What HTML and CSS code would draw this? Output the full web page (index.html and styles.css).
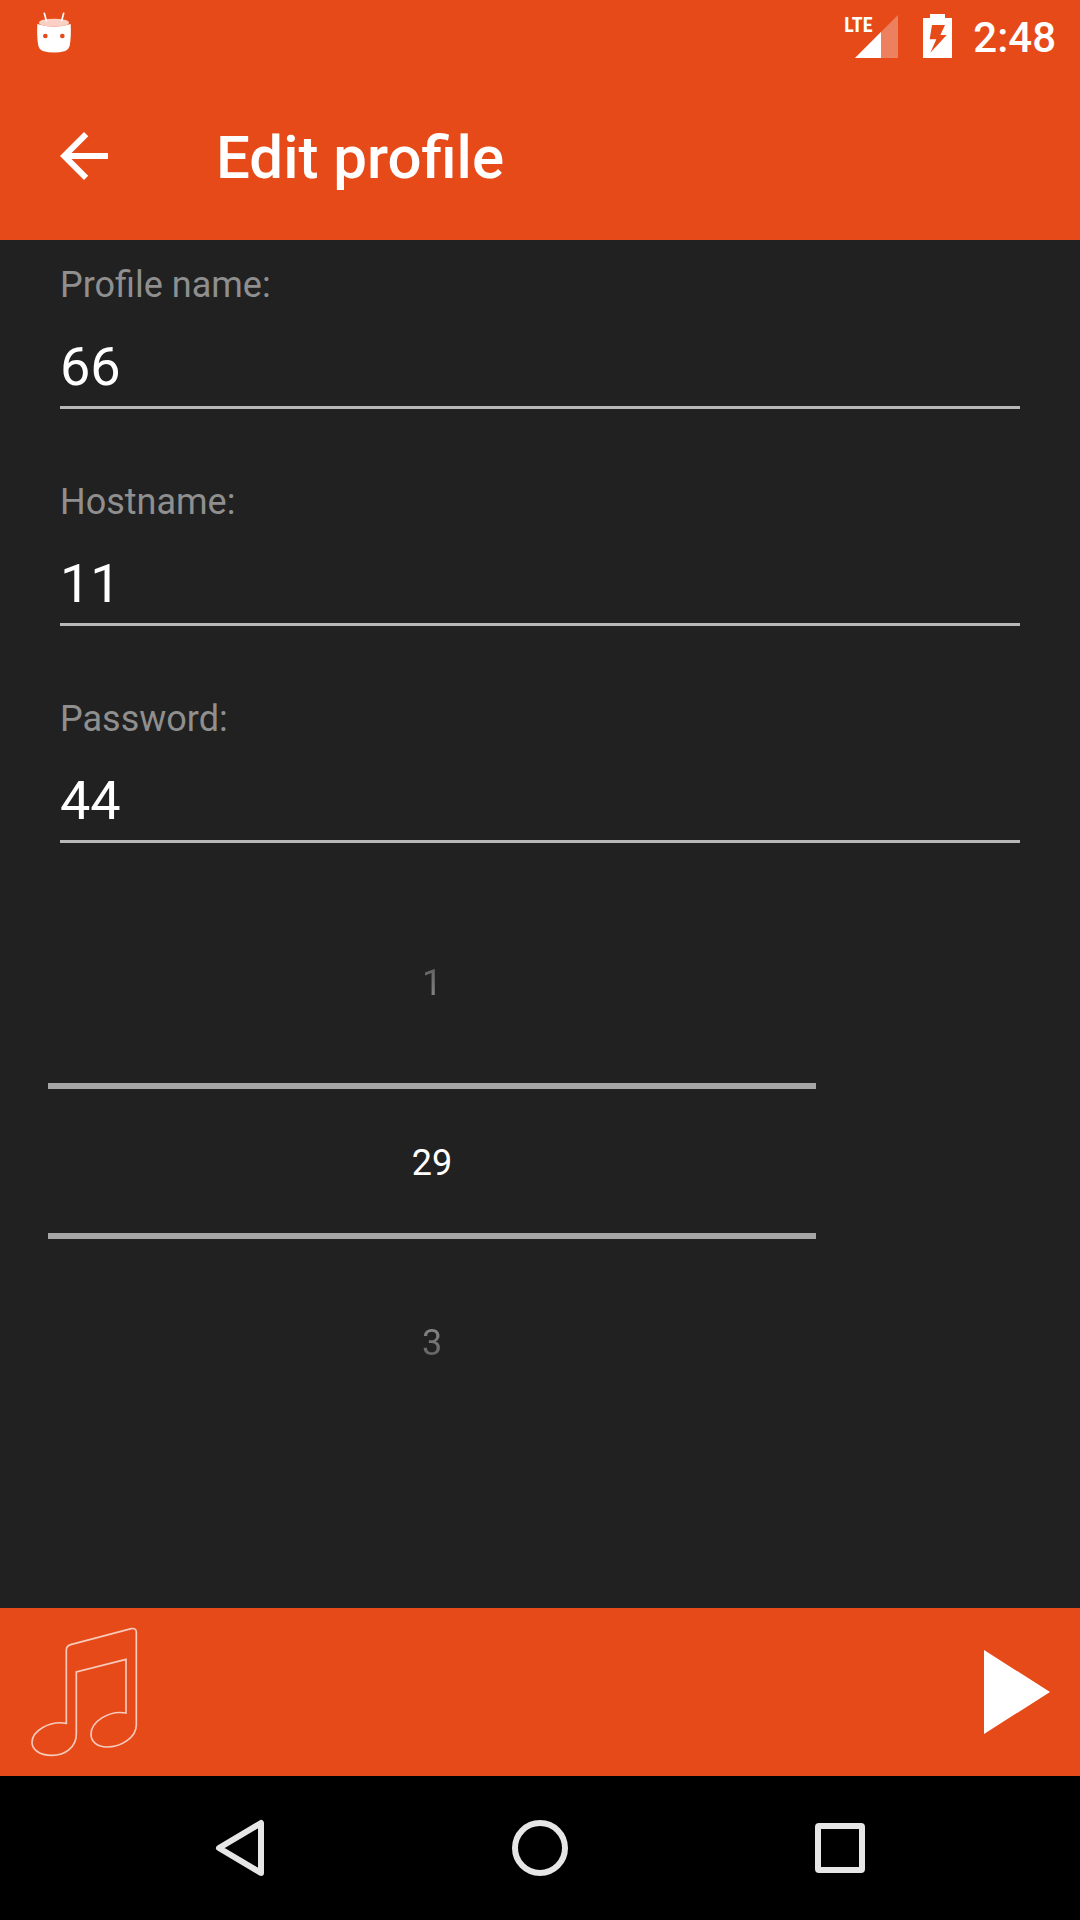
FILE: index.html
```html
<!DOCTYPE html>
<html lang="en">
<head>
<meta charset="utf-8">
<meta name="viewport" content="width=device-width, initial-scale=1">
<title>Edit profile</title>
<link rel="stylesheet" href="styles.css">
</head>
<body>
<div class="screen">
  <div class="status-bar">
    <svg class="robot" viewBox="108 36 108 126" aria-hidden="true">
      <path d="M112 72Q162 88 212 72Q214 110 209 138Q206 149 196 153Q162 162 128 153Q118 149 115 138Q110 110 112 72Z" fill="#fff"/>
      <ellipse cx="162" cy="68" rx="45" ry="12" fill="#fad0c4"/>
      <path d="M133 40L139 62M191 40L185 62" stroke="#fff" stroke-width="5" stroke-linecap="round"/>
      <circle cx="136" cy="108" r="7" fill="#e64a19"/>
      <circle cx="187" cy="108" r="7" fill="#e64a19"/>
    </svg>
    <div class="status-icons">
      <div class="signal">
        <span class="signal-type">LTE</span>
        <svg class="signal-bars" viewBox="0 0 43 43" aria-hidden="true">
          <path d="M0 43L43 0V43Z" fill="#fff" fill-opacity=".3"/>
          <path d="M0 43L26 17V43Z" fill="#fff"/>
        </svg>
      </div>
      <svg class="battery" viewBox="309 42 87 132" aria-hidden="true">
        <path fill="#fff" fill-rule="evenodd" d="M330 42H375V54H396V174H309V54H330ZM336 75L329 118H349L331 158L380 105H361L375 75Z"/>
      </svg>
      <time class="clock">2:48</time>
    </div>
  </div>

  <header class="app-bar">
    <button class="back" type="button" aria-label="Back">
      <svg viewBox="0 0 48 48" aria-hidden="true"><path d="M48 21H11.500L28.300 4.200L24 0L0 24L24 48L28.200 43.800L11.500 27H48Z" fill="#fff"/></svg>
    </button>
    <h1 class="title">Edit profile</h1>
  </header>

  <main class="form">
    <div class="field">
      <label for="profile-name">Profile name:</label>
      <input id="profile-name" type="text" value="66">
    </div>
    <div class="field">
      <label for="hostname">Hostname:</label>
      <input id="hostname" type="text" value="11">
    </div>
    <div class="field">
      <label for="password">Password:</label>
      <input id="password" type="text" value="44">
    </div>
    <div class="picker" role="group" aria-label="Number">
      <button class="step step-up" type="button"><span>1</span></button>
      <input class="picked" type="text" inputmode="numeric" value="29" aria-label="Value">
      <button class="step step-down" type="button"><span>3</span></button>
    </div>
  </main>

  <footer class="player">
    <svg class="note" viewBox="90 78 324 396" aria-hidden="true">
      <path d="M199 370V150Q199 138 212 134L394 86Q409 83 409 97V374C409 412 364 441 320 441C292 441 273 425 273 403C273 366 325 330 378 339V178L229 216V402C229 441 196 466 155 466C118 466 96 448 96 427C96 393 148 361 199 370Z" fill="none" stroke="#f8cabc" stroke-width="5"/>
    </svg>
    <button class="play" type="button" aria-label="Play">
      <svg viewBox="0 0 66 84" aria-hidden="true"><path d="M0 0L66 42L0 84Z" fill="#fff"/></svg>
    </button>
  </footer>

  <nav class="nav-bar" aria-label="System">
    <button type="button" aria-label="Back">
      <svg viewBox="0 0 60 60" aria-hidden="true"><path d="M51 5V55L9 30Z" fill="none" stroke="#e6e6e6" stroke-width="6" stroke-linejoin="round"/></svg>
    </button>
    <button type="button" aria-label="Home">
      <svg viewBox="0 0 60 60" aria-hidden="true"><circle cx="30" cy="30" r="25" fill="none" stroke="#e6e6e6" stroke-width="6"/></svg>
    </button>
    <button type="button" aria-label="Recent apps">
      <svg viewBox="0 0 60 60" aria-hidden="true"><rect x="8" y="8" width="44" height="44" rx="1" fill="none" stroke="#e6e6e6" stroke-width="6" stroke-linejoin="round"/></svg>
    </button>
  </nav>
</div>
</body>
</html>
```
FILE: styles.css
```css
* {
  box-sizing: border-box;
}

body {
  margin: 0;
  background: #212121;
  color: #fff;
  font-family: Roboto, "Noto Sans", sans-serif;
}

button {
  display: flex;
  align-items: center;
  justify-content: center;
  padding: 0;
  border: 0;
  background: none;
  color: inherit;
  font: inherit;
}

input {
  display: block;
  width: 100%;
  min-width: 0;
  border: 0;
  border-radius: 0;
  background: none;
  color: inherit;
  font: inherit;
  outline: 0;
}

svg {
  display: block;
}

.screen {
  display: flex;
  flex-direction: column;
  min-height: 100vh;
}

.status-bar {
  display: flex;
  align-items: center;
  justify-content: space-between;
  height: 72px;
  padding: 0 24px 0 36px;
  background: #e64a19;
}

.robot {
  width: 36px;
  height: 42px;
  margin-bottom: 6px;
}

.status-icons {
  display: flex;
  align-items: center;
}

.signal {
  position: relative;
  padding-left: 11px;
}

.signal-bars {
  width: 43px;
  height: 43px;
}

.signal-type {
  position: absolute;
  top: 0;
  left: 0;
  font-family: "Roboto Condensed", "Liberation Sans Narrow", Roboto, sans-serif;
  font-size: 20px;
  font-weight: 700;
  line-height: 20px;
}

.battery {
  width: 29px;
  height: 44px;
  margin: 0 21px 0 25px;
}

.clock {
  padding-top: 4px;
  font-size: 42px;
  font-weight: 500;
  line-height: 50px;
}

.app-bar {
  display: flex;
  align-items: center;
  gap: 108px;
  height: 168px;
  padding: 0 60px;
  background: #e64a19;
}

.back,
.back svg {
  width: 48px;
  height: 48px;
}

.title {
  margin: 0;
  padding-top: 4px;
  font-size: 60px;
  font-weight: 500;
  line-height: 72px;
}

.form {
  flex: 1;
  padding: 24px 60px 0;
}

.field + .field {
  margin-top: 72px;
}

.field label {
  display: block;
  color: #8f8f8f;
  font-size: 36px;
  line-height: 42px;
}

.field input {
  height: 103px;
  padding: 28px 0 8px;
  border-bottom: 3px solid #b8b8b8;
  font-size: 54px;
  line-height: 64px;
}

.picker {
  width: 80%;
  margin: 39px 0 0 -12px;
  font-size: 36px;
  line-height: 42px;
}

.step {
  width: 100%;
  height: 201px;
}

.step span {
  background-clip: text;
  color: transparent;
}

.step-up span {
  background-image: linear-gradient(#5c5c5c, #8c8c8c);
}

.step-down {
  padding-top: 6px;
}

.step-down span {
  background-image: linear-gradient(#8c8c8c, #5c5c5c);
}

.picked {
  height: 156px;
  padding: 4px 0 0;
  border: solid #a6a6a6;
  border-width: 6px 0;
  text-align: center;
}

.player {
  display: flex;
  align-items: center;
  justify-content: space-between;
  height: 168px;
  padding: 0 30px;
  background: #e64a19;
}

.note {
  width: 108px;
  height: 132px;
}

.play svg {
  width: 66px;
  height: 84px;
}

.nav-bar {
  display: grid;
  grid-template-columns: repeat(3, 1fr);
  height: 144px;
  padding: 0 90px;
  background: #000;
}

.nav-bar svg {
  width: 60px;
  height: 60px;
}
```
